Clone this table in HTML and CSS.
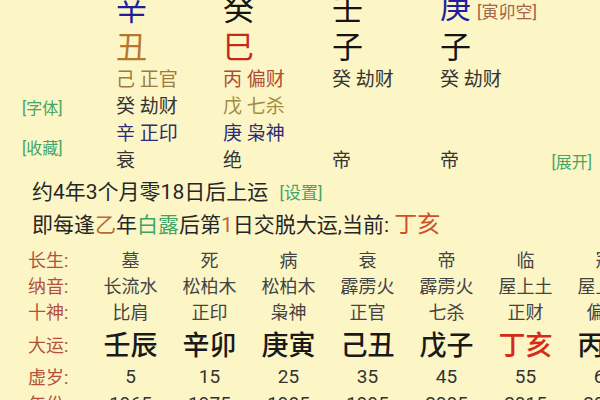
FILE: index.html
```html
<!DOCTYPE html>
<html lang="zh">
<head>
<meta charset="utf-8">
<link rel="stylesheet" href="styles.css">
</head>
<body>
<div class="page">
  <div class="pillars">
    <span></span>
    <span class="stem blue">辛</span>
    <span class="stem">癸</span>
    <span class="stem">壬</span>
    <span class="stem blue">庚<span class="kong">[寅卯空]</span></span>
    <span></span>

    <span></span>
    <span class="branch chou">丑</span>
    <span class="branch si">巳</span>
    <span class="branch">子</span>
    <span class="branch">子</span>
    <span></span>

    <span></span>
    <span class="hid brown">己 正官</span>
    <span class="hid redbrown">丙 偏财</span>
    <span class="hid grey">癸 劫财</span>
    <span class="hid grey">癸 劫财</span>
    <span></span>

    <span class="link">[字体]</span>
    <span class="hid grey">癸 劫财</span>
    <span class="hid olive">戊 七杀</span>
    <span></span>
    <span></span>
    <span></span>

    <span class="link fav">[收藏]</span>
    <span class="hid navy">辛 正印</span>
    <span class="hid navy">庚 枭神</span>
    <span></span>
    <span></span>
    <span></span>

    <span class="hid grey">衰</span>
    <span class="hid grey">绝</span>
    <span class="hid grey">帝</span>
    <span class="hid grey">帝</span>
    <span class="link expand">[展开]</span>
  </div>

  <div class="info">
    <p>约4年3个月零18日后上运 <span class="link small">[设置]</span></p>
    <p>即每逢<span class="hl-brown">乙</span>年<span class="hl-green">白露</span>后第<span class="hl-brown">1</span>日交脱大运,当前: <span class="cur">丁亥</span></p>
  </div>

  <div class="luck">
    <div class="lrow r-a">
      <span class="lab">长生:</span>
      <span>墓</span><span>死</span><span>病</span><span>衰</span><span>帝</span><span>临</span><span>冠</span>
    </div>
    <div class="lrow r-b">
      <span class="lab">纳音:</span>
      <span>长流水</span><span>松柏木</span><span>松柏木</span><span>霹雳火</span><span>霹雳火</span><span>屋上土</span><span>屋上土</span>
    </div>
    <div class="lrow r-c">
      <span class="lab">十神:</span>
      <span>比肩</span><span>正印</span><span>枭神</span><span>正官</span><span>七杀</span><span>正财</span><span>偏财</span>
    </div>
    <div class="lrow r-d">
      <span class="lab">大运:</span>
      <span>壬辰</span><span>辛卯</span><span>庚寅</span><span>己丑</span><span>戊子</span><span class="now">丁亥</span><span>丙戌</span>
    </div>
    <div class="lrow r-e">
      <span class="lab">虚岁:</span>
      <span>5</span><span>15</span><span>25</span><span>35</span><span>45</span><span>55</span><span>65</span>
    </div>
    <div class="lrow r-f">
      <span class="lab">年份:</span>
      <span>1965</span><span>1975</span><span>1985</span><span>1995</span><span>2005</span><span>2015</span><span>2025</span>
    </div>
  </div>
</div>
</body>
</html>
```

FILE: styles.css
```css
html, body {
  margin: 0;
  padding: 0;
}
body {
  width: 600px;
  height: 400px;
  overflow: hidden;
  background: #fcf6c6;
  font-family: Roboto, "Noto Sans CJK SC", sans-serif;
  color: #222;
}
.page {
  position: relative;
  top: -10px;
}
.pillars {
  display: grid;
  grid-template-columns: 116px 107px 109px 108px 108px 1fr;
  grid-template-rows: 39px 37px 27px 27px 27px 27px;
  align-items: center;
  white-space: nowrap;
}
.stem {
  font-size: 31px;
  line-height: 39px;
  color: #141414;
}
.stem.blue { color: #1f1f9e; }
.kong {
  font-size: 17px;
  color: #a3644c;
  margin-left: 6px;
}
.branch {
  font-size: 31px;
  line-height: 37px;
  color: #141414;
}
.branch.chou { color: #b5772c; }
.branch.si { color: #c42a1e; }
.hid {
  font-size: 19px;
  line-height: 27px;
}
.brown { color: #9c7a40; }
.redbrown { color: #b04c32; }
.grey { color: #353535; }
.olive { color: #a48c3e; }
.navy { color: #2c2c78; }
.link {
  color: #45a468;
  font-size: 16px;
}
.pillars .link {
  padding-left: 22px;
}
.pillars .fav {
  grid-row: span 2;
}
.pillars .expand {
  justify-self: end;
  padding-right: 8px;
  padding-left: 0;
}
.info {
  padding: 3px 0 0 32px;
  font-size: 21px;
  line-height: 31px;
  color: #262626;
  white-space: nowrap;
}
.info p {
  margin: 0;
}
.info .small {
  font-size: 17px;
  margin-left: 6px;
}
.hl-brown { color: #b66a36; }
.hl-green { color: #3ea466; }
.cur {
  color: #d24e2c;
  font-size: 23px;
}
.luck {
  padding-top: 4px;
}
.lrow {
  display: grid;
  grid-template-columns: 91px repeat(7, 79px);
  align-items: center;
  white-space: nowrap;
  text-align: center;
  font-size: 18px;
  color: #444;
  box-sizing: border-box;
}
.lrow .lab {
  text-align: left;
  padding-left: 28px;
  color: #b4503c;
}
.r-a { height: 27px; }
.r-b { height: 26px; }
.r-c { height: 26px; }
.r-d {
  height: 38px;
  padding-bottom: 6px;
  font-size: 27px;
  font-weight: 500;
  color: #1a1a1a;
}
.r-d .lab { font-size: 18px; font-weight: 400; }
.r-d .now { color: #d62a1a; }
.r-e { height: 28px; font-size: 19px; color: #333; }
.r-f { height: 26px; font-size: 19px; color: #333; }
.r-e .lab, .r-f .lab { font-size: 18px; }
```
